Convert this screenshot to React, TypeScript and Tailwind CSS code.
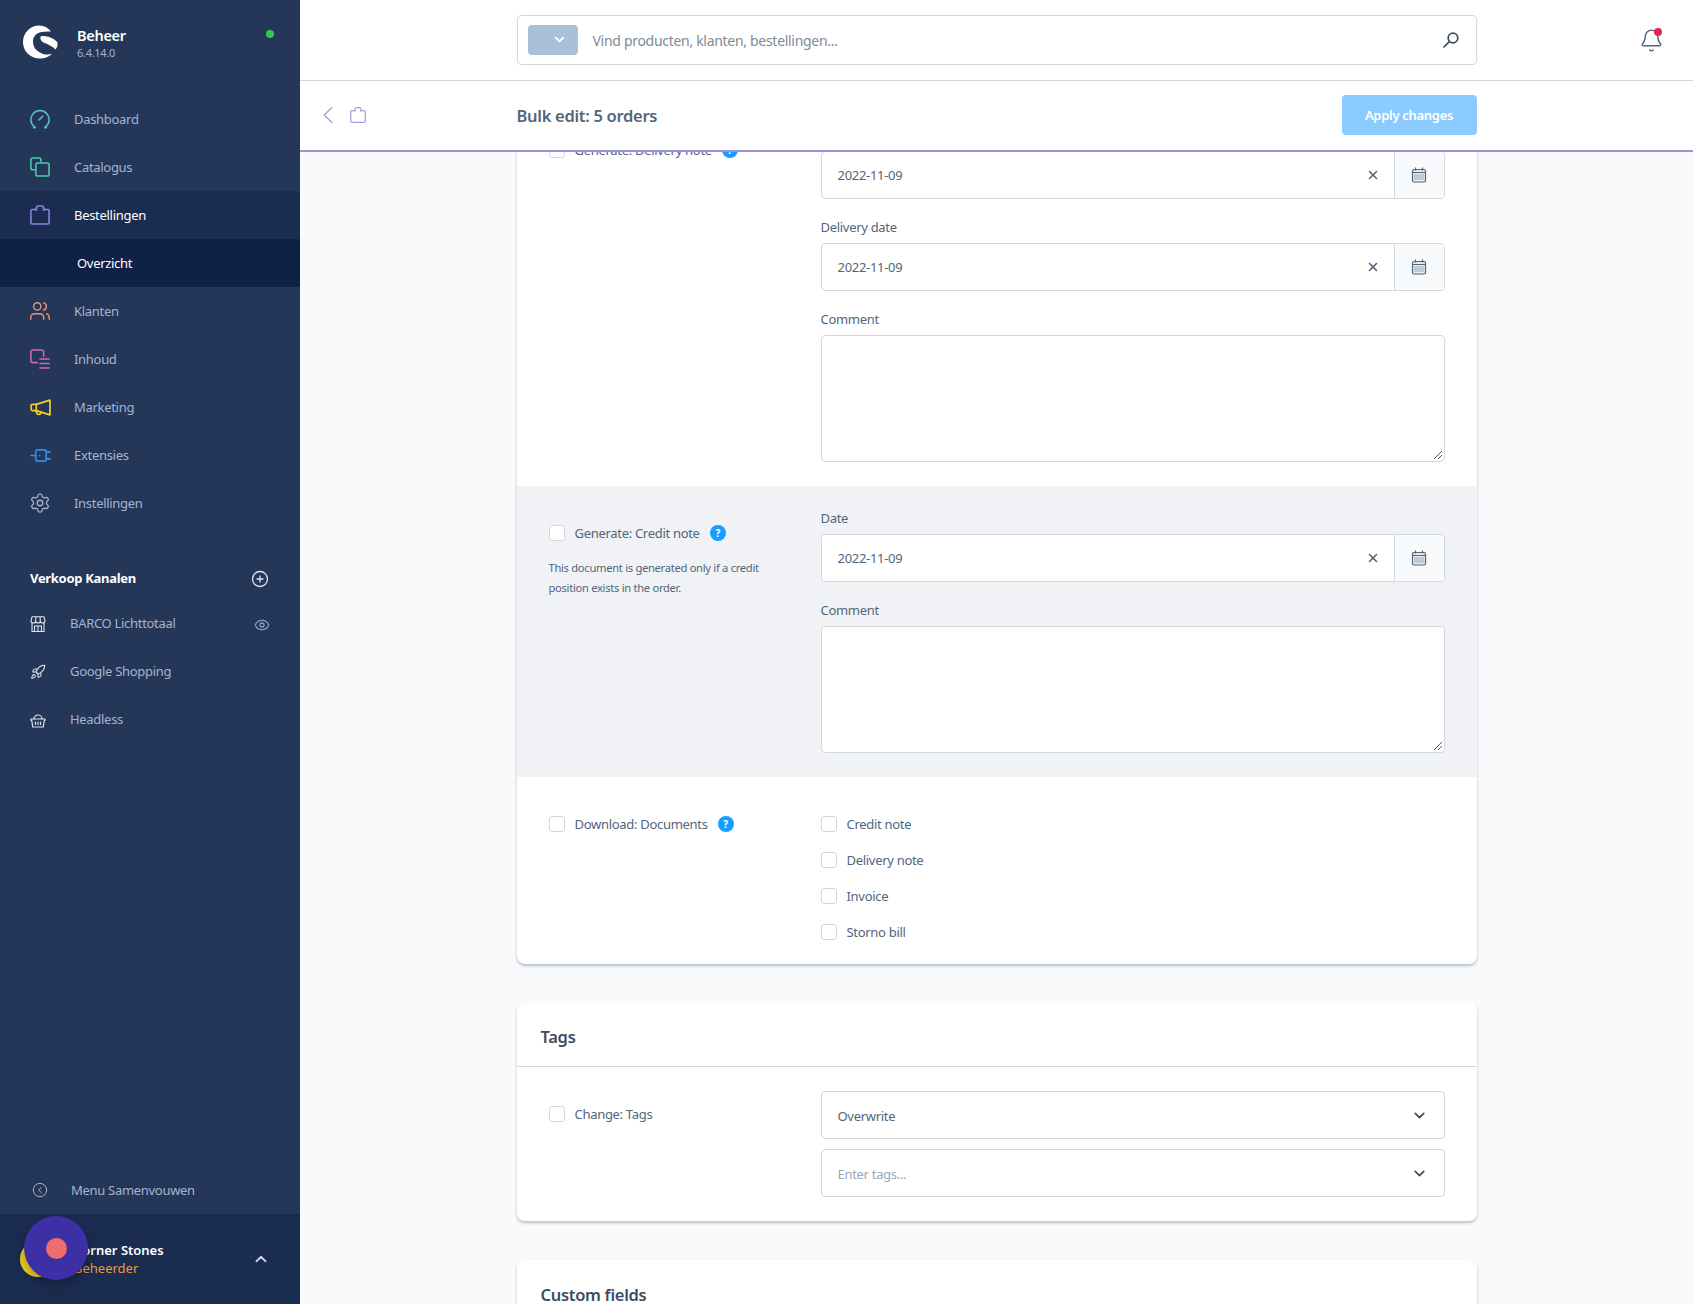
import React from "react";
import { Users, Settings, Rocket, Eye, CirclePlus, CircleChevronLeft, ChevronUp, ChevronDown, ChevronLeft, Bell, X } from "lucide-react";

function Logo() {
  return (
    <svg width="36" height="36" viewBox="0 0 36 36" className="shrink-0">
      <path fill="#fff" d="M29 7.500C26 3.500 22 1.500 17.500 1.500 8 1.500 1 9 1 18c0 9.500 7.500 16.500 17 16.500 5 0 9-1.800 12-4.800-3 1-7 1.300-11-.7-5-2.500-8-6-8-11.500 0-5.500 4-9 9-9.500 3.500-.4 7-.5 9-.5z" />
      <path fill="#fff" d="M20 12c5-.5 13 2.500 15.500 6.500.5 2.500-.5 5-2 7-3-3-8-5.500-12-7-3-1.500-4.500-6-1.500-6.500z" />
    </svg>
  );
}
function Gauge() {
  return (
    <svg width="20" height="20" viewBox="0 0 22 22" fill="none" stroke="#55c1dd" strokeWidth="1.700" strokeLinecap="round" strokeLinejoin="round">
      <path d="M4.800 19.500A10 10 0 1 1 17.200 19.500" />
      <path d="M3.800 20.500h2M18.200 20.500h-2M10 12 14 8" />
    </svg>
  );
}
function Copies() {
  return (
    <svg width="20" height="20" viewBox="0 0 22 22" fill="none" stroke="#4fc9a8" strokeWidth="1.700" strokeLinejoin="round">
      <path d="M6 14H3a2 2 0 0 1-2-2V3a2 2 0 0 1 2-2h7a2 2 0 0 1 2 2v3" />
      <rect x="6.500" y="6.500" width="14.500" height="14.500" rx="2" />
    </svg>
  );
}
function Bag({ c = "#8c87e0", s = 20 }: { c?: string; s?: number }) {
  return (
    <svg width={s} height={s} viewBox="0 0 22 22" fill="none" stroke={c} strokeWidth="1.700" strokeLinejoin="round">
      <path d="M7 5H2.500A1.500 1.500 0 0 0 1 6.500v13A1.500 1.500 0 0 0 2.500 21h17a1.500 1.500 0 0 0 1.500-1.500v-13A1.500 1.500 0 0 0 19.500 5H15" />
      <path d="M7 6.500V3a2 2 0 0 1 2-2h4a2 2 0 0 1 2 2v3.500" />
    </svg>
  );
}
function Content() {
  return (
    <svg width="20" height="20" viewBox="0 0 22 22" fill="none" stroke="#d764bc" strokeWidth="1.700" strokeLinecap="round" strokeLinejoin="round">
      <path d="M8 15H3a2 2 0 0 1-2-2V3a2 2 0 0 1 2-2h10a2 2 0 0 1 2 2v5" />
      <path d="M11 11h10M11 16h10M11 21h10" />
    </svg>
  );
}
function Horn() {
  return (
    <svg width="21" height="17" viewBox="0 0 20 16" fill="none" stroke="#f2d024" strokeWidth="1.600" strokeLinecap="round" strokeLinejoin="round">
      <path d="M6 5 19 1v14L6 11z" />
      <path d="M6 5H2.500A1.500 1.500 0 0 0 1 6.500v3A1.500 1.500 0 0 0 2.500 11H6" />
      <path d="M5.500 11l1.500 3.200c1 .5 2.500.3 3.300-.5l.4-1.200" />
    </svg>
  );
}
function Plug() {
  return (
    <svg width="21" height="21" viewBox="0 0 22 22" fill="none" stroke="#2f8fe8" strokeWidth="1.800" strokeLinecap="round" strokeLinejoin="round">
      <rect x="6" y="5" width="11" height="12" rx="2" />
      <path d="M1 11h5M17 7.500h4M17 14.500h4" />
      <path d="M10 11h.01" />
    </svg>
  );
}
function Shop() {
  return (
    <svg width="16" height="16" viewBox="0 0 16 16" fill="none" stroke="#dde3ee" strokeWidth="1.100" strokeLinejoin="round">
      <path d="M2 7v8.500h12V7" />
      <path d="M1 5a2.330 2 0 0 0 4.670 0 2.330 2 0 0 0 4.670 0 2.330 2 0 0 0 4.670 0L14 .8H2z" />
      <path d="M5.670 5 6 .8M10.330 5 10 .8M4.500 15.500V10h7v5.500M8 10v5.500" />
    </svg>
  );
}
function Basket() {
  return (
    <svg width="16" height="15" viewBox="0 0 16 15" fill="none" stroke="#dde3ee" strokeWidth="1.200" strokeLinecap="round" strokeLinejoin="round">
      <path d="M1 6h14v1.500h-.8L13.300 14H2.700L1.800 7.500H1z" />
      <path d="M4 6a4 4 0 0 1 8 0" />
      <path d="M5.500 9v2.500M8 9v2.500M10.500 9v2.500" />
    </svg>
  );
}
function Cal() {
  return (
    <svg width="16" height="16" viewBox="0 0 16 16" fill="none" stroke="#52667a" strokeWidth="1.200">
      <rect x="1.500" y="2.500" width="13" height="12.500" rx="1.500" fill="#e8ebef" />
      <path d="M1.500 5.500h13M4.500 .5v3M11.500 .5v3" />
      <path strokeDasharray="1 1" strokeWidth="1" d="M3.500 8h9M3.500 10h9M3.500 12h9" />
    </svg>
  );
}
function Magnifier() {
  return (
    <svg width="16" height="16" viewBox="0 0 16 16" fill="none" stroke="#3d4c5c" strokeWidth="1.700" strokeLinecap="round" className="ml-auto">
      <circle cx="10" cy="6" r="4.800" />
      <path d="M6.300 9.700 1 15" />
    </svg>
  );
}

const nav: [string, React.ReactNode][] = [
  ["Dashboard", <Gauge />],
  ["Catalogus", <Copies />],
];
const nav2: [string, React.ReactNode][] = [
  ["Klanten", <Users size={22} strokeWidth={1.500} color="#f0937a" />],
  ["Inhoud", <Content />],
  ["Marketing", <Horn />],
  ["Extensies", <Plug />],
  ["Instellingen", <Settings size={22} strokeWidth={1.400} color="#a5b4d0" />],
];
const channels: [string, React.ReactNode][] = [
  ["BARCO Lichttotaal", <Shop />],
  ["Google Shopping", <Rocket size={16} strokeWidth={1.600} />],
  ["Headless", <Basket />],
];

function NavRow({ label, icon }: { label: string; icon: React.ReactNode }) {
  return (
    <div className="h-12 flex items-center pl-[29px] text-[#a5b4d0]">
      <span className="w-[22px] h-[22px] flex items-center justify-center">{icon}</span>
      <span className="ml-[23px] pt-[2px] text-[13px]">{label}</span>
    </div>
  );
}

function Sidebar() {
  return (
    <aside className="w-[300px] shrink-0 bg-[#243758] flex flex-col h-full">
      <div className="h-[95px] flex pl-[22px] pt-[24px] pr-[26px] relative">
        <Logo />
        <div className="ml-[19px] pt-[1px]">
          <div className="text-[14.500px] leading-[20px] font-semibold text-white">Beheer</div>
          <div className="text-[11px] leading-[14px] mt-[1px] text-[#a5b4d0]">6.4.14.0</div>
        </div>
        <span className="ml-auto mt-[6px] w-2 h-2 rounded-full bg-[#37c452]" />
      </div>
      <nav>
        {nav.map(([l, i]) => <NavRow key={l} label={l} icon={i} />)}
        <div className="h-12 flex items-center pl-[29px] bg-[#1a2c50] text-white">
          <span className="w-[22px] h-[22px] flex items-center justify-center"><Bag /></span>
          <span className="ml-[23px] pt-[2px] text-[13px]">Bestellingen</span>
        </div>
        <div className="h-12 flex items-center pl-[77px] pt-[2px] bg-[#0f2147] text-white text-[13px]">Overzicht</div>
        {nav2.map(([l, i]) => <NavRow key={l} label={l} icon={i} />)}
      </nav>
      <div className="mt-[28px] h-[48px] flex items-center justify-between pl-[30px] pr-[31px] text-white">
        <span className="text-[13px] font-bold">Verkoop Kanalen</span>
        <CirclePlus size={18} strokeWidth={1.700} color="#dfe5f0" />
      </div>
      <div>
        {channels.map(([l, i], n) => (
          <div key={l} className={"h-12 flex items-center pl-[30px] pr-[30px] text-[#a5b4d0] " + (n === 0 ? "-mt-[3px]" : "")}>
            <span className="w-[16px] flex justify-center text-[#dde3ee]">{i}</span>
            <span className="ml-[24px] text-[13px]">{l}</span>
            {n === 0 && <Eye size={16} strokeWidth={2} className="ml-auto mt-[1px] text-[#8a9abb]" />}
          </div>
        ))}
      </div>
      <div className="mt-auto h-[48px] flex items-center pl-[32px] text-[#a5b4d0]">
        <CircleChevronLeft size={16} strokeWidth={1.500} />
        <span className="ml-[23px] pt-[2px] text-[13px]">Menu Samenvouwen</span>
      </div>
      <div className="h-[90px] bg-[#1a2c50] flex items-center pl-[20px] pr-[30px] relative">
        <span className="w-9 h-9 rounded-full bg-[#f2cf1c] shrink-0" />
        <div className="ml-[18px] tracking-normal">
          <div className="text-[13px] font-semibold leading-[18px] text-white">Corner Stones</div>
          <div className="text-[13px] leading-[18px] text-[#e9993f]">Beheerder</div>
        </div>
        <ChevronUp size={18} strokeWidth={2.500} className="ml-auto text-[#c3cee3]" />
      </div>
    </aside>
  );
}

function CheckBox() {
  return <span className="w-4 h-4 shrink-0 rounded-[3px] border border-[#d1d9e0] bg-white" />;
}
function Help() {
  return <span className="w-4 h-4 rounded-full bg-[#189eff] text-white text-[10px] font-bold flex items-center justify-center">?</span>;
}
function CheckLabel({ text, help }: { text: string; help?: boolean }) {
  return (
    <div className="flex items-center h-4">
      <CheckBox />
      <span className="ml-[10px] pt-[2px] text-[13px] text-[#52667a]">{text}</span>
      {help && <span className="ml-[10px]"><Help /></span>}
    </div>
  );
}
function Label({ children }: { children: string }) {
  return <div className="h-6 text-[13px] leading-[17px] text-[#52667a]">{children}</div>;
}
function DateInput() {
  return (
    <div className="h-[48px] flex border border-[#d1d9e0] rounded bg-white overflow-hidden">
      <span className="pl-4 pt-[1px] flex-1 flex items-center text-[13px] text-[#52667a]">2022-11-09</span>
      <span className="w-[16px] mr-[13px] flex items-center justify-center text-[#52667a] -mt-[1px]"><X size={14} strokeWidth={2.800} /></span>
      <span className="w-[50px] border-l border-[#d1d9e0] bg-[#f9fafb] flex items-center justify-center"><Cal /></span>
    </div>
  );
}
function Area() {
  return (
    <div className="h-[127px] border border-[#d1d9e0] rounded bg-white relative">
      <svg width="10" height="10" viewBox="0 0 10 10" className="absolute right-[1px] bottom-[1px]" stroke="#555" strokeWidth="1">
        <path d="M1 9 9 1M5 9 9 5" />
      </svg>
    </div>
  );
}
function SelectBox({ text, muted }: { text: string; muted?: boolean }) {
  return (
    <div className="h-[48px] flex items-center justify-between pl-4 pr-4 border border-[#d1d9e0] rounded bg-white text-[13px]">
      <span className={"pt-[4px] " + (muted ? "text-[#9aa8b5]" : "text-[#52667a]")}>{text}</span>
      <ChevronDown size={17} strokeWidth={2.400} className="text-[#3d4c5c]" />
    </div>
  );
}
function Row({ left, right, gray, pt = "pt-6" }: { left: React.ReactNode; right: React.ReactNode; gray?: boolean; pt?: string }) {
  return (
    <div className={"flex pl-8 pr-8 pb-6 " + (gray ? "bg-[#f0f2f5] " : "") + pt}>
      <div className={"w-[272px] shrink-0 pr-8 " + (pt === "pt-6" ? "pt-[15px]" : "")}>{left}</div>
      <div className="flex-1 flex flex-col">{right}</div>
    </div>
  );
}

const cardCls = "w-[960px] mx-auto bg-white rounded-lg shadow-[0_2px_3px_0_rgba(120,138,155,0.5)]";

function Main() {
  return (
    <main className="flex-1 min-w-0 flex flex-col bg-[#f9fafb] h-full overflow-hidden">
      <header className="h-[81px] shrink-0 bg-white border-b border-[#d1d9e0] grid grid-cols-[1fr_960px_1fr] items-center">
        <div />
        <div className="h-[50px] -mt-[1px] border border-[#d1d9e0] rounded flex items-center pl-[10px] pr-[17px]">
          <span className="w-[50px] h-[30px] bg-[#a9c0d9] rounded flex items-center justify-end pr-[11px]">
            <ChevronDown size={15} strokeWidth={3} color="#fff" />
          </span>
          <span className="ml-[15px] pt-[2px] text-[14px] text-[#7d8b99]">Vind producten, klanten, bestellingen...</span>
          <Magnifier />
        </div>
        <div className="flex justify-end pr-[29px] pt-[1px]">
          <span className="relative">
            <Bell size={25} strokeWidth={1.300} className="text-[#52667a]" />
            <span className="absolute top-0 right-[2px] w-2 h-2 rounded-full bg-[#de294c]" />
          </span>
        </div>
      </header>
      <div className="h-[71px] shrink-0 relative z-10 bg-white border-b-2 border-[#9f92d9] grid grid-cols-[1fr_960px_1fr] items-center">
        <div className="flex items-center pl-[13px] gap-[7px] -mt-[2px]">
          <ChevronLeft size={30} strokeWidth={1} className="text-[#a79bdb]" />
          <Bag c="#a79bdb" s={16} />
        </div>
        <div className="flex items-center justify-between -mt-[2px]">
          <span className="pt-[4px] text-[16.500px] font-semibold text-[#52667a]">Bulk edit: 5 orders</span>
          <span className="w-[135px] h-10 pt-[2px] rounded bg-[#8bcbff] text-white text-[13px] font-semibold flex items-center justify-center">Apply changes</span>
        </div>
      </div>
      <div className="flex-1 min-h-0">
        <div className={cardCls + " -mt-[49px] relative"}>
          <Row
            left={<CheckLabel text="Generate: Delivery note" help />}
            right={
              <>
                <Label>Date</Label>
                <DateInput />
                <div className="mt-[20px]"><Label>Delivery date</Label></div>
                <DateInput />
                <div className="mt-[20px]"><Label>Comment</Label></div>
                <Area />
              </>
            }
          />
          <Row
            gray
            left={
              <>
                <CheckLabel text="Generate: Credit note" help />
                <p className="mt-[17px] text-[11.200px] leading-5 text-[#52667a]">This document is generated only if a credit position exists in the order.</p>
              </>
            }
            right={
              <>
                <Label>Date</Label>
                <DateInput />
                <div className="mt-[20px]"><Label>Comment</Label></div>
                <Area />
              </>
            }
          />
          <Row
            pt="pt-[39px]"
            left={<CheckLabel text="Download: Documents" help />}
            right={
              <div className="flex flex-col gap-5">
                {["Credit note", "Delivery note", "Invoice", "Storno bill"].map((t) => <CheckLabel key={t} text={t} />)}
              </div>
            }
          />
        </div>
        <div className={cardCls + " mt-[39px]"}>
          <div className="h-[64px] pt-[6px] border-b border-[#d1d9e0] flex items-center pl-6 text-[16.500px] font-semibold text-[#3d4c5c]">Tags</div>
          <Row
            left={<CheckLabel text="Change: Tags" />}
            right={
              <div className="flex flex-col gap-[10px]">
                <SelectBox text="Overwrite" />
                <SelectBox text="Enter tags..." muted />
              </div>
            }
          />
        </div>
        <div className={cardCls + " mt-[39px]"}>
          <div className="h-[64px] pt-[6px] flex items-center pl-6 text-[16.500px] font-semibold text-[#3d4c5c]">Custom fields</div>
        </div>
      </div>
    </main>
  );
}

export default function App() {
  return (
    <div className="relative h-[1304px] w-full overflow-hidden flex tracking-[-0.3px]" style={{ fontFamily: '"Noto Sans", "Open Sans", sans-serif' }}>
      <Sidebar />
      <Main />
      <div className="absolute left-[24px] top-[1216px] w-16 h-16 rounded-full bg-[#3d2fa6] shadow-[0_4px_12px_rgba(0,0,0,0.3)] flex items-center justify-center">
        <span className="w-[21px] h-[21px] rounded-full bg-[#f06d6d]" />
      </div>
    </div>
  );
}
